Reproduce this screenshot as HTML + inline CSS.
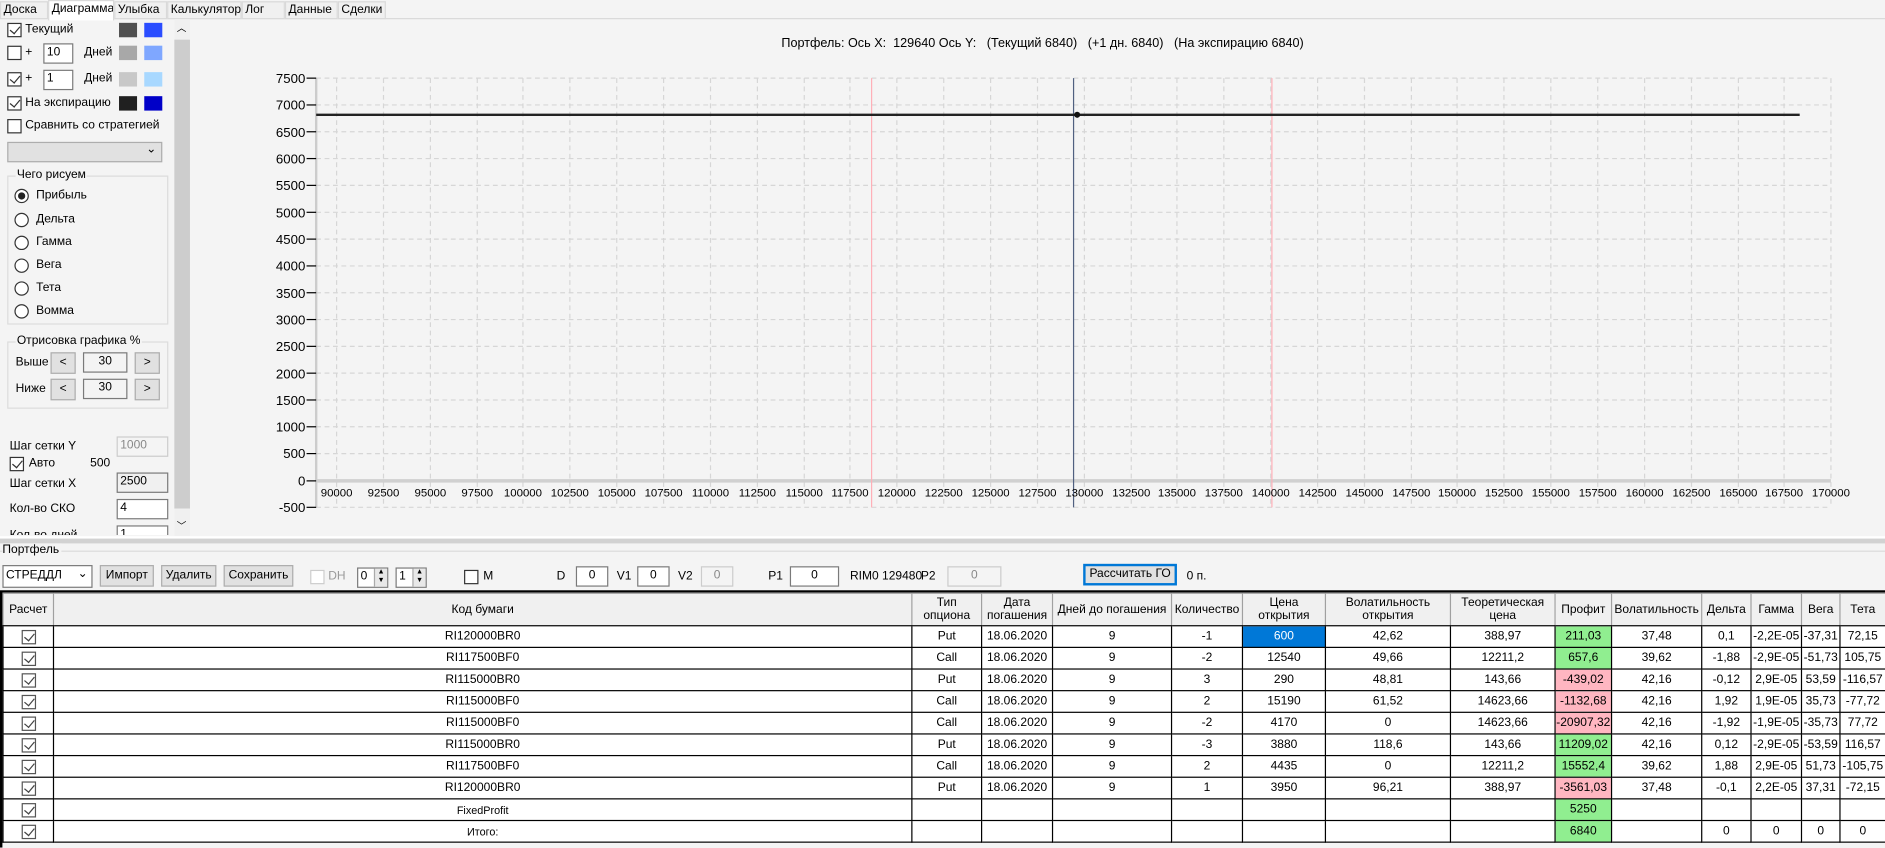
<!DOCTYPE html>
<html><head><meta charset="utf-8">
<style>
*{box-sizing:border-box;margin:0;padding:0}
body{width:1885px;height:847px;background:#f4f4f4;font-family:"Liberation Sans",sans-serif;font-size:10px;color:#000;overflow:hidden}
#w{position:absolute;left:0;top:0;width:1568px;height:705px;transform:scale(1.2022);transform-origin:0 0}
.a{position:absolute;white-space:nowrap}
.tab{position:absolute;top:1px;height:15px;border:1px solid #d9d9d9;background:#f0f0f0;padding:1px 2px;font-size:10px;overflow:hidden}
.cb{position:absolute;width:12px;height:12px;border:1px solid #333;background:#fff}
.cb.c::after{content:"";position:absolute;left:3px;top:0px;width:4px;height:7px;border:solid #333;border-width:0 1px 1px 0;transform:rotate(40deg)}
.rb{position:absolute;width:12px;height:12px;border:1px solid #333;border-radius:50%;background:#fff}
.rb.c::after{content:"";position:absolute;left:2px;top:2px;width:6px;height:6px;border-radius:50%;background:#222}
.tb{position:absolute;border:1px solid #7a7a7a;background:#fff;height:17px;padding:1px 2px}
.sw{position:absolute;width:15px;height:12px}
.btn{position:absolute;border:1px solid #adadad;background:#e1e1e1;height:18px;text-align:center;line-height:16px}
.grp{position:absolute;border:1px solid #dcdcdc}
.grp span{position:absolute;top:-7px;left:6px;background:#f4f4f4;padding:0 1px}
table{position:absolute;left:2px;top:493px;border-collapse:collapse;table-layout:fixed;width:1566px;background:#fff}
td,th{border:1px solid #000;text-align:center;font-weight:normal;height:18px;padding:0;overflow:hidden;white-space:nowrap;font-size:10px}
th{background:#f0f0f0;height:27px;line-height:11px;border-color:#a0a0a0;white-space:normal;border-bottom:1px solid #000}
.g{background:#90ee90}.p{background:#ffb6c1}.s{background:#0078d7;color:#fff}
td .ck{display:inline-block;width:12px;height:12px;border:1px solid #555;position:relative;vertical-align:middle}
td .ck::after{content:"";position:absolute;left:3px;top:0;width:4px;height:7px;border:solid #444;border-width:0 1px 1px 0;transform:rotate(40deg)}
</style></head><body><div id="w">
<div style="position:absolute;left:0;top:15px;width:1568px;height:1px;background:#d9d9d9"></div>
<div class="tab" style="left:0;width:40px">Доска</div>
<div class="tab" style="left:40px;width:55px;background:#fff;top:0;height:17px;border-bottom:none">Диаграмма</div>
<div class="tab" style="left:95px;width:44px">Улыбка</div>
<div class="tab" style="left:139px;width:62px">Калькулятор</div>
<div class="tab" style="left:201px;width:36px">Лог</div>
<div class="tab" style="left:237px;width:44px">Данные</div>
<div class="tab" style="left:281px;width:40px">Сделки</div>

<div class="cb c" style="left:6px;top:19px"></div><div class="a" style="left:21px;top:19px">Текущий</div>
<div class="sw" style="left:99px;top:19px;background:#505050"></div><div class="sw" style="left:120px;top:19px;background:#2a4dff"></div>
<div class="cb" style="left:6px;top:38px"></div><div class="a" style="left:21px;top:38px">+</div>
<div class="tb" style="left:36px;top:36px;width:25px">10</div><div class="a" style="left:70px;top:38px">Дней</div>
<div class="sw" style="left:99px;top:38px;background:#a8a8a8"></div><div class="sw" style="left:120px;top:38px;background:#7fa7ff"></div>
<div class="cb c" style="left:6px;top:60px"></div><div class="a" style="left:21px;top:60px">+</div>
<div class="tb" style="left:36px;top:58px;width:25px">1</div><div class="a" style="left:70px;top:60px">Дней</div>
<div class="sw" style="left:99px;top:60px;background:#c8c8c8"></div><div class="sw" style="left:120px;top:60px;background:#a8d8ff"></div>
<div class="cb c" style="left:6px;top:80px"></div><div class="a" style="left:21px;top:80px">На экспирацию</div>
<div class="sw" style="left:99px;top:80px;background:#202020"></div><div class="sw" style="left:120px;top:80px;background:#0000c8"></div>
<div class="cb" style="left:6px;top:99px"></div><div class="a" style="left:21px;top:99px">Сравнить со стратегией</div>
<div class="a" style="left:6px;top:118px;width:129px;height:17px;border:1px solid #adadad;background:#e1e1e1"><span style="position:absolute;right:4px;top:0;font-size:10px">⌄</span></div>
<div class="grp" style="left:6px;top:146px;width:134px;height:124px"><span>Чего рисуем</span></div>
<div class="rb c" style="left:12px;top:157px"></div><div class="a" style="left:30px;top:157px">Прибыль</div>
<div class="rb" style="left:12px;top:177px"></div><div class="a" style="left:30px;top:177px">Дельта</div>
<div class="rb" style="left:12px;top:196px"></div><div class="a" style="left:30px;top:196px">Гамма</div>
<div class="rb" style="left:12px;top:215px"></div><div class="a" style="left:30px;top:215px">Вега</div>
<div class="rb" style="left:12px;top:234px"></div><div class="a" style="left:30px;top:234px">Тета</div>
<div class="rb" style="left:12px;top:253px"></div><div class="a" style="left:30px;top:253px">Вомма</div>
<div class="grp" style="left:6px;top:284px;width:134px;height:56px"><span>Отрисовка графика %</span></div>
<div class="a" style="left:13px;top:296px">Выше</div>
<div class="btn" style="left:42px;top:293px;width:21px">&lt;</div>
<div class="tb" style="left:69px;top:293px;width:37px;text-align:center;background:#f4f4f4">30</div>
<div class="btn" style="left:112px;top:293px;width:21px">&gt;</div>
<div class="a" style="left:13px;top:318px">Ниже</div>
<div class="btn" style="left:42px;top:315px;width:21px">&lt;</div>
<div class="tb" style="left:69px;top:315px;width:37px;text-align:center;background:#f4f4f4">30</div>
<div class="btn" style="left:112px;top:315px;width:21px">&gt;</div>
<div class="a" style="left:8px;top:366px">Шаг сетки Y</div>
<div class="tb" style="left:97px;top:363px;width:43px;border-color:#ccc;color:#888;background:#f4f4f4">1000</div>
<div class="cb c" style="left:8px;top:380px"></div><div class="a" style="left:24px;top:380px">Авто</div><div class="a" style="left:75px;top:380px">500</div>
<div class="a" style="left:8px;top:397px">Шаг сетки X</div>
<div class="tb" style="left:97px;top:393px;width:43px;background:#f0f0f0">2500</div>
<div class="a" style="left:8px;top:418px">Кол-во СКО</div>
<div class="tb" style="left:97px;top:415px;width:43px">4</div>
<div class="a" style="left:0;top:436px;width:145px;height:9px;overflow:hidden"><div class="a" style="left:8px;top:4px">Кол-во дней</div><div class="tb" style="left:97px;top:1px;width:43px">1</div></div>
<div class="a" style="left:145px;top:16px;width:13px;height:430px;background:#f0f0f0"></div>
<div class="a" style="left:145px;top:33px;width:13px;height:390px;background:#cdcdcd"></div>
<div class="a" style="left:147px;top:18px;font-size:8px">︿</div>
<div class="a" style="left:147px;top:432px;font-size:8px">﹀</div>

<div class="a" style="left:650px;top:30px;font-size:10.5px">Портфель: Ось X:&nbsp; 129640 Ось Y:&nbsp;&nbsp; (Текущий 6840)&nbsp;&nbsp; (+1 дн. 6840)&nbsp;&nbsp; (На экспирацию 6840)</div>
<svg class="a" style="left:0;top:0" width="1568" height="447" font-family="Liberation Sans" font-size="10">
<g stroke="#d6d6d6" stroke-dasharray="4,3">
<line x1="263" y1="65" x2="1523" y2="65"/><line x1="263" y1="87.3" x2="1523" y2="87.3"/><line x1="263" y1="109.6" x2="1523" y2="109.6"/><line x1="263" y1="131.9" x2="1523" y2="131.9"/><line x1="263" y1="154.2" x2="1523" y2="154.2"/><line x1="263" y1="176.6" x2="1523" y2="176.6"/><line x1="263" y1="198.9" x2="1523" y2="198.9"/><line x1="263" y1="221.2" x2="1523" y2="221.2"/><line x1="263" y1="243.5" x2="1523" y2="243.5"/><line x1="263" y1="265.8" x2="1523" y2="265.8"/><line x1="263" y1="288.1" x2="1523" y2="288.1"/><line x1="263" y1="310.4" x2="1523" y2="310.4"/><line x1="263" y1="332.7" x2="1523" y2="332.7"/><line x1="263" y1="355" x2="1523" y2="355"/><line x1="263" y1="377.3" x2="1523" y2="377.3"/><line x1="263" y1="422" x2="1523" y2="422"/>
<line x1="280" y1="65" x2="280" y2="422"/><line x1="319" y1="65" x2="319" y2="422"/><line x1="358" y1="65" x2="358" y2="422"/><line x1="397" y1="65" x2="397" y2="422"/><line x1="435" y1="65" x2="435" y2="422"/><line x1="474" y1="65" x2="474" y2="422"/><line x1="513" y1="65" x2="513" y2="422"/><line x1="552" y1="65" x2="552" y2="422"/><line x1="591" y1="65" x2="591" y2="422"/><line x1="630" y1="65" x2="630" y2="422"/><line x1="669" y1="65" x2="669" y2="422"/><line x1="707" y1="65" x2="707" y2="422"/><line x1="746" y1="65" x2="746" y2="422"/><line x1="785" y1="65" x2="785" y2="422"/><line x1="824" y1="65" x2="824" y2="422"/><line x1="863" y1="65" x2="863" y2="422"/><line x1="902" y1="65" x2="902" y2="422"/><line x1="941" y1="65" x2="941" y2="422"/><line x1="979" y1="65" x2="979" y2="422"/><line x1="1018" y1="65" x2="1018" y2="422"/><line x1="1057" y1="65" x2="1057" y2="422"/><line x1="1096" y1="65" x2="1096" y2="422"/><line x1="1135" y1="65" x2="1135" y2="422"/><line x1="1174" y1="65" x2="1174" y2="422"/><line x1="1212" y1="65" x2="1212" y2="422"/><line x1="1251" y1="65" x2="1251" y2="422"/><line x1="1290" y1="65" x2="1290" y2="422"/><line x1="1329" y1="65" x2="1329" y2="422"/><line x1="1368" y1="65" x2="1368" y2="422"/><line x1="1407" y1="65" x2="1407" y2="422"/><line x1="1446" y1="65" x2="1446" y2="422"/><line x1="1484" y1="65" x2="1484" y2="422"/><line x1="1523" y1="65" x2="1523" y2="422"/>
</g>
<line x1="263" y1="65" x2="263" y2="422" stroke="#ccc" stroke-width="2"/>
<line x1="263" y1="400" x2="1523" y2="400" stroke="#d0d0d0" stroke-width="3"/>
<line x1="725" y1="65" x2="725" y2="422" stroke="#ffb0b8"/>
<line x1="1058" y1="65" x2="1058" y2="422" stroke="#ffb0b8"/>
<line x1="893" y1="65" x2="893" y2="422" stroke="#506080"/>
<line x1="263" y1="95.5" x2="1497" y2="95.5" stroke="#222" stroke-width="2"/>
<circle cx="896" cy="95.5" r="2.5" fill="#111"/>
<g stroke="#000"><line x1="255" y1="65" x2="263" y2="65"/><line x1="255" y1="87.3" x2="263" y2="87.3"/><line x1="255" y1="109.6" x2="263" y2="109.6"/><line x1="255" y1="131.9" x2="263" y2="131.9"/><line x1="255" y1="154.2" x2="263" y2="154.2"/><line x1="255" y1="176.6" x2="263" y2="176.6"/><line x1="255" y1="198.9" x2="263" y2="198.9"/><line x1="255" y1="221.2" x2="263" y2="221.2"/><line x1="255" y1="243.5" x2="263" y2="243.5"/><line x1="255" y1="265.8" x2="263" y2="265.8"/><line x1="255" y1="288.1" x2="263" y2="288.1"/><line x1="255" y1="310.4" x2="263" y2="310.4"/><line x1="255" y1="332.7" x2="263" y2="332.7"/><line x1="255" y1="355" x2="263" y2="355"/><line x1="255" y1="377.3" x2="263" y2="377.3"/><line x1="255" y1="400" x2="263" y2="400"/><line x1="255" y1="422" x2="263" y2="422"/></g>
<g text-anchor="end" font-size="11"><text x="254" y="69">7500</text><text x="254" y="91">7000</text><text x="254" y="114">6500</text><text x="254" y="136">6000</text><text x="254" y="158">5500</text><text x="254" y="181">5000</text><text x="254" y="203">4500</text><text x="254" y="225">4000</text><text x="254" y="248">3500</text><text x="254" y="270">3000</text><text x="254" y="292">2500</text><text x="254" y="315">2000</text><text x="254" y="337">1500</text><text x="254" y="359">1000</text><text x="254" y="381">500</text><text x="254" y="404">0</text><text x="254" y="426">-500</text></g>
<g text-anchor="middle" font-size="9.5"><text x="280" y="413">90000</text><text x="319" y="413">92500</text><text x="358" y="413">95000</text><text x="397" y="413">97500</text><text x="435" y="413">100000</text><text x="474" y="413">102500</text><text x="513" y="413">105000</text><text x="552" y="413">107500</text><text x="591" y="413">110000</text><text x="630" y="413">112500</text><text x="669" y="413">115000</text><text x="707" y="413">117500</text><text x="746" y="413">120000</text><text x="785" y="413">122500</text><text x="824" y="413">125000</text><text x="863" y="413">127500</text><text x="902" y="413">130000</text><text x="941" y="413">132500</text><text x="979" y="413">135000</text><text x="1018" y="413">137500</text><text x="1057" y="413">140000</text><text x="1096" y="413">142500</text><text x="1135" y="413">145000</text><text x="1174" y="413">147500</text><text x="1212" y="413">150000</text><text x="1251" y="413">152500</text><text x="1290" y="413">155000</text><text x="1329" y="413">157500</text><text x="1368" y="413">160000</text><text x="1407" y="413">162500</text><text x="1446" y="413">165000</text><text x="1484" y="413">167500</text><text x="1523" y="413">170000</text></g>
</svg>

<div class="a" style="left:0;top:446px;width:1568px;height:2px;background:#fff"></div>
<div class="a" style="left:0;top:448px;width:1568px;height:4px;background:#d2d2d2"></div>
<div class="a" style="left:0;top:458px;width:1568px;height:1px;background:#dcdcdc"></div>
<div class="a" style="left:2px;top:452px;background:#f4f4f4;padding-right:2px">Портфель</div>

<div class="a" style="left:2px;top:470px;width:75px;height:19px;border:1px solid #7a7a7a;background:#fff;padding:2px">СТРЕДДЛ<span style="position:absolute;right:3px;top:1px;font-size:10px">⌄</span></div>
<div class="btn" style="left:83px;top:470px;width:45px">Импорт</div>
<div class="btn" style="left:134px;top:470px;width:46px">Удалить</div>
<div class="btn" style="left:186px;top:470px;width:58px">Сохранить</div>
<div class="cb" style="left:258px;top:474px;border-color:#ccc"></div><div class="a" style="left:273px;top:474px;color:#999">DH</div>
<div class="tb" style="left:297px;top:472px;width:26px;height:17px">0</div><div class="a" style="left:311px;top:473px;width:11px;height:15px;background:#e8e8e8;border-left:1px solid #aaa;font-size:6px;line-height:7px;text-align:center">▲<br>▼</div>
<div class="tb" style="left:329px;top:472px;width:26px;height:17px">1</div><div class="a" style="left:343px;top:473px;width:11px;height:15px;background:#e8e8e8;border-left:1px solid #aaa;font-size:6px;line-height:7px;text-align:center">▲<br>▼</div>
<div class="cb" style="left:386px;top:474px"></div><div class="a" style="left:402px;top:474px">M</div>
<div class="a" style="left:463px;top:474px">D</div><div class="tb" style="left:479px;top:471px;width:27px;text-align:center">0</div>
<div class="a" style="left:513px;top:474px">V1</div><div class="tb" style="left:530px;top:471px;width:27px;text-align:center">0</div>
<div class="a" style="left:564px;top:474px">V2</div><div class="tb" style="left:583px;top:471px;width:27px;text-align:center;border-color:#ccc;color:#888;background:#f4f4f4">0</div>
<div class="a" style="left:639px;top:474px">P1</div><div class="tb" style="left:657px;top:471px;width:41px;text-align:center">0</div>
<div class="a" style="left:707px;top:474px">RIM0 129480</div>
<div class="a" style="left:766px;top:474px">P2</div><div class="tb" style="left:788px;top:471px;width:45px;text-align:center;border-color:#ccc;color:#888;background:#f4f4f4">0</div>
<div class="btn" style="left:901px;top:469px;width:78px;border:2px solid #0078d7;line-height:14px;white-space:nowrap">Рассчитать ГО</div>
<div class="a" style="left:987px;top:474px">0 п.</div>
<div class="a" style="left:0;top:491px;width:1568px;height:2px;background:#000"></div>

<table>
<colgroup><col style="width:42px"><col style="width:714px"><col style="width:58px"><col style="width:59px"><col style="width:99px"><col style="width:59px"><col style="width:69px"><col style="width:104px"><col style="width:87px"><col style="width:47px"><col style="width:75px"><col style="width:41px"><col style="width:42px"><col style="width:32px"><col style="width:38px"></colgroup>
<tr><th>Расчет</th><th>Код бумаги</th><th>Тип опциона</th><th>Дата погашения</th><th>Дней до погашения</th><th>Количество</th><th>Цена открытия</th><th>Волатильность открытия</th><th>Теоретическая цена</th><th>Профит</th><th>Волатильность</th><th>Дельта</th><th>Гамма</th><th>Вега</th><th>Тета</th></tr>
<tr><td><span class="ck"></span></td><td>RI120000BR0</td><td>Put</td><td>18.06.2020</td><td>9</td><td>-1</td><td class="s">600</td><td>42,62</td><td>388,97</td><td class="g">211,03</td><td>37,48</td><td>0,1</td><td>-2,2E-05</td><td>-37,31</td><td>72,15</td></tr>
<tr><td><span class="ck"></span></td><td>RI117500BF0</td><td>Call</td><td>18.06.2020</td><td>9</td><td>-2</td><td>12540</td><td>49,66</td><td>12211,2</td><td class="g">657,6</td><td>39,62</td><td>-1,88</td><td>-2,9E-05</td><td>-51,73</td><td>105,75</td></tr>
<tr><td><span class="ck"></span></td><td>RI115000BR0</td><td>Put</td><td>18.06.2020</td><td>9</td><td>3</td><td>290</td><td>48,81</td><td>143,66</td><td class="p">-439,02</td><td>42,16</td><td>-0,12</td><td>2,9E-05</td><td>53,59</td><td>-116,57</td></tr>
<tr><td><span class="ck"></span></td><td>RI115000BF0</td><td>Call</td><td>18.06.2020</td><td>9</td><td>2</td><td>15190</td><td>61,52</td><td>14623,66</td><td class="p">-1132,68</td><td>42,16</td><td>1,92</td><td>1,9E-05</td><td>35,73</td><td>-77,72</td></tr>
<tr><td><span class="ck"></span></td><td>RI115000BF0</td><td>Call</td><td>18.06.2020</td><td>9</td><td>-2</td><td>4170</td><td>0</td><td>14623,66</td><td class="p">-20907,32</td><td>42,16</td><td>-1,92</td><td>-1,9E-05</td><td>-35,73</td><td>77,72</td></tr>
<tr><td><span class="ck"></span></td><td>RI115000BR0</td><td>Put</td><td>18.06.2020</td><td>9</td><td>-3</td><td>3880</td><td>118,6</td><td>143,66</td><td class="g">11209,02</td><td>42,16</td><td>0,12</td><td>-2,9E-05</td><td>-53,59</td><td>116,57</td></tr>
<tr><td><span class="ck"></span></td><td>RI117500BF0</td><td>Call</td><td>18.06.2020</td><td>9</td><td>2</td><td>4435</td><td>0</td><td>12211,2</td><td class="g">15552,4</td><td>39,62</td><td>1,88</td><td>2,9E-05</td><td>51,73</td><td>-105,75</td></tr>
<tr><td><span class="ck"></span></td><td>RI120000BR0</td><td>Put</td><td>18.06.2020</td><td>9</td><td>1</td><td>3950</td><td>96,21</td><td>388,97</td><td class="p">-3561,03</td><td>37,48</td><td>-0,1</td><td>2,2E-05</td><td>37,31</td><td>-72,15</td></tr>
<tr><td><span class="ck"></span></td><td style="font-size:9px">FixedProfit</td><td></td><td></td><td></td><td></td><td></td><td></td><td></td><td class="g">5250</td><td></td><td></td><td></td><td></td><td></td></tr>
<tr><td><span class="ck"></span></td><td style="font-size:9px">Итого:</td><td></td><td></td><td></td><td></td><td></td><td></td><td></td><td class="g">6840</td><td></td><td>0</td><td>0</td><td>0</td><td>0</td></tr>
</table>
<div class="a" style="left:0;top:492px;width:2px;height:213px;background:#000"></div>
</div></body></html>
